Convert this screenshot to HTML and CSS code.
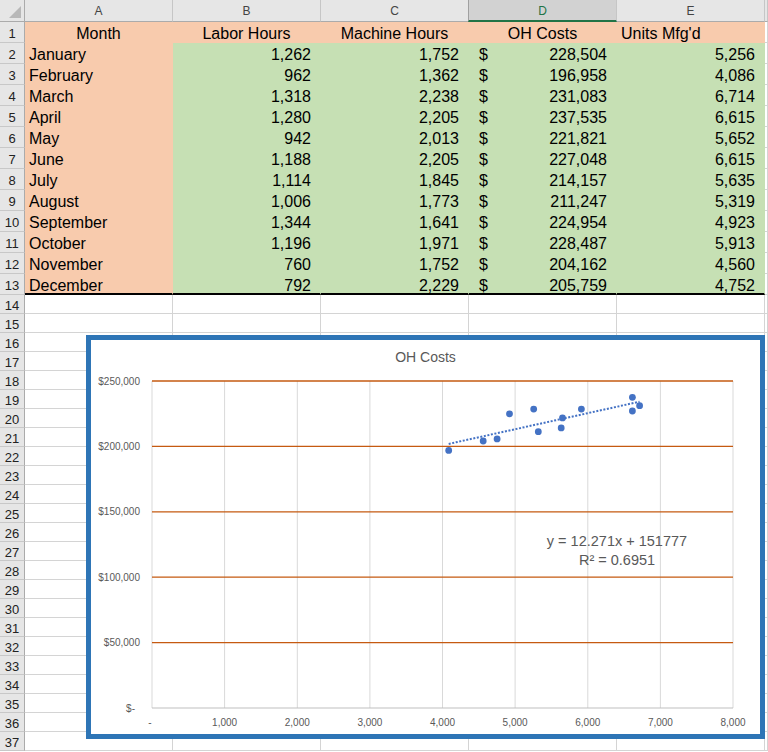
FILE: index.html
```html
<!DOCTYPE html>
<html>
<head>
<meta charset="utf-8">
<link rel="stylesheet" href="styles.css">
</head>
<body>
<div class="page">
<div class="sheet">
  <div class="corner"><span class="tri"></span></div>
  <div class="ch">A</div><div class="ch">B</div><div class="ch">C</div><div class="ch sel">D</div><div class="ch">E</div><div class="ch end"></div>

  <div class="rh">1</div><div class="c pe ctr">Month</div><div class="c pe ctr">Labor Hours</div><div class="c pe ctr">Machine Hours</div><div class="c pe ctr">OH Costs</div><div class="c pe lft">Units Mfg'd</div><div class="c"></div>

  <div class="rh">2</div><div class="c pe lft">January</div><div class="c gr num">1,262</div><div class="c gr num">1,752</div><div class="c gr acc"><span>$</span><span>228,504</span></div><div class="c gr num">5,256</div><div class="c"></div>
  <div class="rh">3</div><div class="c pe lft">February</div><div class="c gr num">962</div><div class="c gr num">1,362</div><div class="c gr acc"><span>$</span><span>196,958</span></div><div class="c gr num">4,086</div><div class="c"></div>
  <div class="rh">4</div><div class="c pe lft">March</div><div class="c gr num">1,318</div><div class="c gr num">2,238</div><div class="c gr acc"><span>$</span><span>231,083</span></div><div class="c gr num">6,714</div><div class="c"></div>
  <div class="rh">5</div><div class="c pe lft">April</div><div class="c gr num">1,280</div><div class="c gr num">2,205</div><div class="c gr acc"><span>$</span><span>237,535</span></div><div class="c gr num">6,615</div><div class="c"></div>
  <div class="rh">6</div><div class="c pe lft">May</div><div class="c gr num">942</div><div class="c gr num">2,013</div><div class="c gr acc"><span>$</span><span>221,821</span></div><div class="c gr num">5,652</div><div class="c"></div>
  <div class="rh">7</div><div class="c pe lft">June</div><div class="c gr num">1,188</div><div class="c gr num">2,205</div><div class="c gr acc"><span>$</span><span>227,048</span></div><div class="c gr num">6,615</div><div class="c"></div>
  <div class="rh">8</div><div class="c pe lft">July</div><div class="c gr num">1,114</div><div class="c gr num">1,845</div><div class="c gr acc"><span>$</span><span>214,157</span></div><div class="c gr num">5,635</div><div class="c"></div>
  <div class="rh">9</div><div class="c pe lft">August</div><div class="c gr num">1,006</div><div class="c gr num">1,773</div><div class="c gr acc"><span>$</span><span>211,247</span></div><div class="c gr num">5,319</div><div class="c"></div>
  <div class="rh">10</div><div class="c pe lft">September</div><div class="c gr num">1,344</div><div class="c gr num">1,641</div><div class="c gr acc"><span>$</span><span>224,954</span></div><div class="c gr num">4,923</div><div class="c"></div>
  <div class="rh">11</div><div class="c pe lft">October</div><div class="c gr num">1,196</div><div class="c gr num">1,971</div><div class="c gr acc"><span>$</span><span>228,487</span></div><div class="c gr num">5,913</div><div class="c"></div>
  <div class="rh">12</div><div class="c pe lft">November</div><div class="c gr num">760</div><div class="c gr num">1,752</div><div class="c gr acc"><span>$</span><span>204,162</span></div><div class="c gr num">4,560</div><div class="c"></div>
  <div class="rh">13</div><div class="c pe lft last">December</div><div class="c gr num last">792</div><div class="c gr num last">2,229</div><div class="c gr acc last"><span>$</span><span>205,759</span></div><div class="c gr num last">4,752</div><div class="c"></div>

  <div class="rh">14</div><div class="c"></div><div class="c"></div><div class="c"></div><div class="c"></div><div class="c"></div><div class="c"></div>
  <div class="rh">15</div><div class="c"></div><div class="c"></div><div class="c"></div><div class="c"></div><div class="c"></div><div class="c"></div>
  <div class="rh">16</div><div class="c"></div><div class="c"></div><div class="c"></div><div class="c"></div><div class="c"></div><div class="c"></div>
  <div class="rh">17</div><div class="c"></div><div class="c"></div><div class="c"></div><div class="c"></div><div class="c"></div><div class="c"></div>
  <div class="rh">18</div><div class="c"></div><div class="c"></div><div class="c"></div><div class="c"></div><div class="c"></div><div class="c"></div>
  <div class="rh">19</div><div class="c"></div><div class="c"></div><div class="c"></div><div class="c"></div><div class="c"></div><div class="c"></div>
  <div class="rh">20</div><div class="c"></div><div class="c"></div><div class="c"></div><div class="c"></div><div class="c"></div><div class="c"></div>
  <div class="rh">21</div><div class="c"></div><div class="c"></div><div class="c"></div><div class="c"></div><div class="c"></div><div class="c"></div>
  <div class="rh">22</div><div class="c"></div><div class="c"></div><div class="c"></div><div class="c"></div><div class="c"></div><div class="c"></div>
  <div class="rh">23</div><div class="c"></div><div class="c"></div><div class="c"></div><div class="c"></div><div class="c"></div><div class="c"></div>
  <div class="rh">24</div><div class="c"></div><div class="c"></div><div class="c"></div><div class="c"></div><div class="c"></div><div class="c"></div>
  <div class="rh">25</div><div class="c"></div><div class="c"></div><div class="c"></div><div class="c"></div><div class="c"></div><div class="c"></div>
  <div class="rh">26</div><div class="c"></div><div class="c"></div><div class="c"></div><div class="c"></div><div class="c"></div><div class="c"></div>
  <div class="rh">27</div><div class="c"></div><div class="c"></div><div class="c"></div><div class="c"></div><div class="c"></div><div class="c"></div>
  <div class="rh">28</div><div class="c"></div><div class="c"></div><div class="c"></div><div class="c"></div><div class="c"></div><div class="c"></div>
  <div class="rh">29</div><div class="c"></div><div class="c"></div><div class="c"></div><div class="c"></div><div class="c"></div><div class="c"></div>
  <div class="rh">30</div><div class="c"></div><div class="c"></div><div class="c"></div><div class="c"></div><div class="c"></div><div class="c"></div>
  <div class="rh">31</div><div class="c"></div><div class="c"></div><div class="c"></div><div class="c"></div><div class="c"></div><div class="c"></div>
  <div class="rh">32</div><div class="c"></div><div class="c"></div><div class="c"></div><div class="c"></div><div class="c"></div><div class="c"></div>
  <div class="rh">33</div><div class="c"></div><div class="c"></div><div class="c"></div><div class="c"></div><div class="c"></div><div class="c"></div>
  <div class="rh">34</div><div class="c"></div><div class="c"></div><div class="c"></div><div class="c"></div><div class="c"></div><div class="c"></div>
  <div class="rh">35</div><div class="c"></div><div class="c"></div><div class="c"></div><div class="c"></div><div class="c"></div><div class="c"></div>
  <div class="rh">36</div><div class="c"></div><div class="c"></div><div class="c"></div><div class="c"></div><div class="c"></div><div class="c"></div>
  <div class="rh">37</div><div class="c"></div><div class="c"></div><div class="c"></div><div class="c"></div><div class="c"></div><div class="c"></div>
</div>

<div class="chart">
  <svg class="plot" width="669" height="394" viewBox="91 340 669 394" xmlns="http://www.w3.org/2000/svg">
    <text class="title" x="425.5" y="362" text-anchor="middle">OH Costs</text>
    <g class="vgrid">
      <line x1="152" y1="381" x2="152" y2="708"/>
      <line x1="224.6" y1="381" x2="224.6" y2="708"/>
      <line x1="297.3" y1="381" x2="297.3" y2="708"/>
      <line x1="369.9" y1="381" x2="369.9" y2="708"/>
      <line x1="442.5" y1="381" x2="442.5" y2="708"/>
      <line x1="515.1" y1="381" x2="515.1" y2="708"/>
      <line x1="587.8" y1="381" x2="587.8" y2="708"/>
      <line x1="660.4" y1="381" x2="660.4" y2="708"/>
      <line x1="733" y1="381" x2="733" y2="708"/>
    </g>
    <g class="hgrid">
      <line x1="152" y1="381" x2="733" y2="381"/>
      <line x1="152" y1="446.4" x2="733" y2="446.4"/>
      <line x1="152" y1="511.8" x2="733" y2="511.8"/>
      <line x1="152" y1="577.2" x2="733" y2="577.2"/>
      <line x1="152" y1="642.6" x2="733" y2="642.6"/>
    </g>
    <line class="axis" x1="152" y1="708" x2="733" y2="708"/>
    <g class="ylab" text-anchor="end">
      <text x="140" y="384.5">$250,000</text>
      <text x="140" y="450">$200,000</text>
      <text x="140" y="515.3">$150,000</text>
      <text x="140" y="580.7">$100,000</text>
      <text x="140" y="646.1">$50,000</text>
      <text x="135" y="712">$-</text>
    </g>
    <g class="xlab" text-anchor="middle">
      <text x="150" y="726">-</text>
      <text x="224.6" y="726">1,000</text>
      <text x="297.3" y="726">2,000</text>
      <text x="369.9" y="726">3,000</text>
      <text x="442.5" y="726">4,000</text>
      <text x="515.1" y="726">5,000</text>
      <text x="587.8" y="726">6,000</text>
      <text x="660.4" y="726">7,000</text>
      <text x="733" y="726">8,000</text>
    </g>
    <line class="trend" x1="448.7" y1="443.9" x2="639.6" y2="401.7"/>
    <g class="pts">
      <circle cx="533.7" cy="409.1" r="3.4"/>
      <circle cx="448.7" cy="450.4" r="3.4"/>
      <circle cx="639.6" cy="405.7" r="3.4"/>
      <circle cx="632.4" cy="397.3" r="3.4"/>
      <circle cx="562.5" cy="417.9" r="3.4"/>
      <circle cx="632.4" cy="411.0" r="3.4"/>
      <circle cx="561.2" cy="427.9" r="3.4"/>
      <circle cx="538.3" cy="431.7" r="3.4"/>
      <circle cx="509.5" cy="413.8" r="3.4"/>
      <circle cx="581.4" cy="409.1" r="3.4"/>
      <circle cx="483.2" cy="441.0" r="3.4"/>
      <circle cx="497.1" cy="438.9" r="3.4"/>
    </g>
    <g class="eq" text-anchor="middle">
      <text x="617" y="545.5">y = 12.271x + 151777</text>
      <text x="617" y="565">R² = 0.6951</text>
    </g>
  </svg>
</div>
</div>
</body>
</html>
```
FILE: styles.css
```css
html, body {
  margin: 0;
  padding: 0;
  background: #ffffff;
}
body {
  width: 768px;
  height: 752px;
  overflow: hidden;
  font-family: "Liberation Sans", Arial, sans-serif;
}
.page {
  position: relative;
  width: 768px;
  height: 752px;
}
.sheet {
  display: grid;
  grid-template-columns: 25px repeat(5, 148px) 1fr;
  grid-template-rows: 22px repeat(13, 21px) repeat(24, 19px);
}
.sheet > div {
  box-sizing: border-box;
  display: flex;
  align-items: center;
  overflow: hidden;
  white-space: nowrap;
}
.corner {
  background: #e6e6e6;
  border-right: 1px solid #ababab;
  border-bottom: 1px solid #ababab;
  position: relative;
}
.tri {
  position: absolute;
  right: 3px;
  bottom: 3px;
  width: 12px;
  height: 12px;
  background: #b8b8b8;
  clip-path: polygon(100% 0, 100% 100%, 0 100%);
}
.ch {
  background: #e6e6e6;
  border-right: 1px solid #c6c6c6;
  border-bottom: 1px solid #ababab;
  justify-content: center;
  font-size: 12px;
  color: #444;
  padding-top: 1px;
}
.ch.sel {
  background: #d2d2d2;
  border-left: 1px solid #a0a0a0;
  border-bottom: 2px solid #217346;
  color: #217346;
  margin-left: -1px;
}
.rh {
  background: #e6e6e6;
  border-right: 1px solid #ababab;
  border-bottom: 1px solid #c8c8c8;
  justify-content: center;
  font-size: 13px;
  color: #222;
  padding-top: 3px;
}
.c {
  border-right: 1px solid #d4d4d4;
  border-bottom: 1px solid #d4d4d4;
  font-size: 16px;
  color: #000;
  padding-top: 4px;
}
.pe {
  background: #f8cbad;
  border-color: #f8cbad;
}
.gr {
  background: #c6e0b4;
  border-color: #c6e0b4;
}
.ctr {
  justify-content: center;
}
.lft {
  justify-content: flex-start;
  padding-left: 4px;
}
.num {
  justify-content: flex-end;
  padding-right: 9px;
}
.acc {
  justify-content: space-between;
  padding-left: 10px;
  padding-right: 9px;
}
.c.last {
  border-bottom: 2px solid #000;
}
.chart {
  position: absolute;
  left: 86px;
  top: 335px;
  width: 679px;
  height: 404px;
  box-sizing: border-box;
  border: 5px solid #2e75b6;
  background: #ffffff;
}
.plot {
  display: block;
  font-family: "Liberation Sans", Arial, sans-serif;
}
.title {
  font-size: 14px;
  fill: #595959;
}
.vgrid line {
  stroke: #d9d9d9;
  stroke-width: 1;
}
.hgrid line {
  stroke: #c55a11;
  stroke-width: 1.3;
}
.axis {
  stroke: #bfbfbf;
  stroke-width: 1;
}
.ylab text, .xlab text {
  font-size: 10px;
  fill: #595959;
}
.trend {
  stroke: #4472c4;
  stroke-width: 2;
  stroke-dasharray: 2 1.6;
}
.pts circle {
  fill: #4472c4;
}
.eq text {
  font-size: 14.5px;
  fill: #595959;
}
```
